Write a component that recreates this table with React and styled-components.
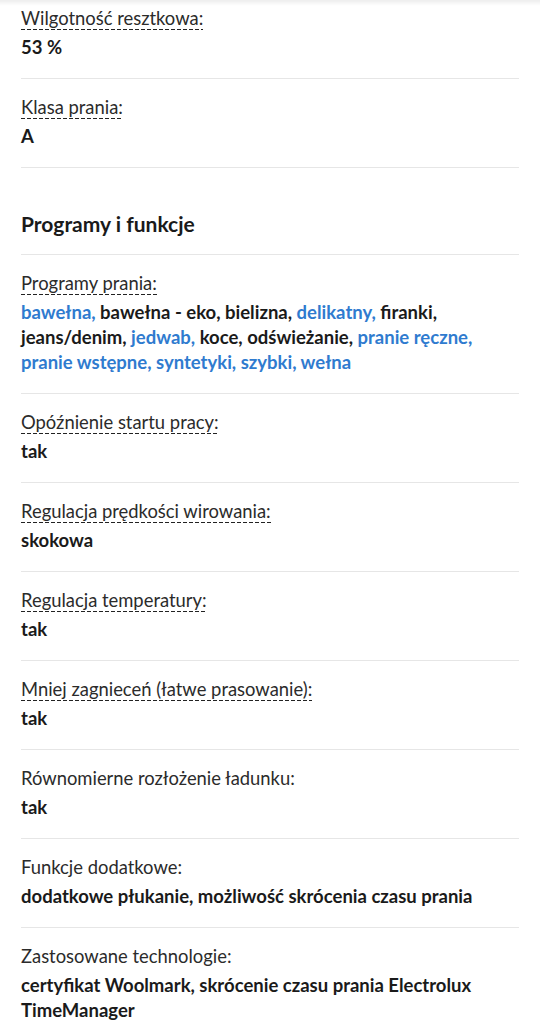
import React from 'react';
import styled, { createGlobalStyle } from 'styled-components';

const GlobalStyle = createGlobalStyle`
	html, body {
		margin: 0;
		padding: 0;
		background: #fff;
	}

	body {
		font-family: Lato, 'Open Sans', sans-serif;
		color: #222;
		-webkit-font-smoothing: antialiased;
	}
`;

const TopShade = styled.div`
	position: fixed;
	top: 0;
	left: 0;
	right: 0;
	height: 6px;
	background: linear-gradient(to bottom, rgba(0, 0, 0, 0.07), rgba(0, 0, 0, 0));
	pointer-events: none;
`;

const Specs = styled.div`
	margin-top: -10px;
	padding: 0 21px;
`;

const SectionTitle = styled.h2`
	margin: 0;
	padding: 41px 0 15px;
	font-size: 21px;
	line-height: 30px;
	font-weight: 700;
	color: #1a1a1a;
	border-bottom: 1px solid #e6e6e6;
`;

const Row = styled.div`
	padding: 15px 0 18px;
	border-bottom: 1px solid #e6e6e6;
`;

const Label = styled.div`
	font-size: 18.4px;
	line-height: 26px;
	font-weight: 400;
	color: #2b2b2b;
`;

const Hint = styled.span`
	padding-bottom: 1px;
	background-image: linear-gradient(to right, #222 4px, transparent 4px);
	background-size: 6px 1px;
	background-repeat: repeat-x;
	background-position: left bottom;
`;

const Value = styled.div`
	margin-top: 4px;
	font-size: 18.5px;
	line-height: 25px;
	font-weight: 700;
	color: #1a1a1a;
`;

const Link = styled.span`
	color: #2f7bcf;
`;

const Spec = ({ label, hint = true, children }) => (
	<Row>
		<Label>{hint ? <Hint>{label}</Hint> : label}</Label>
		<Value>{children}</Value>
	</Row>
);

const App = () => (
	<>
		<GlobalStyle />
		<Specs>
			<Spec label="Wilgotność resztkowa:">53 %</Spec>
			<Spec label="Klasa prania:">A</Spec>

			<SectionTitle>Programy i funkcje</SectionTitle>

			<Spec label="Programy prania:">
				<Link>bawełna,</Link> bawełna - eko, bielizna, <Link>delikatny,</Link> firanki,
				jeans/denim, <Link>jedwab,</Link> koce, odświeżanie, <Link>pranie ręczne,</Link>{' '}
				<Link>pranie wstępne, syntetyki, szybki, wełna</Link>
			</Spec>
			<Spec label="Opóźnienie startu pracy:">tak</Spec>
			<Spec label="Regulacja prędkości wirowania:">skokowa</Spec>
			<Spec label="Regulacja temperatury:">tak</Spec>
			<Spec label="Mniej zagnieceń (łatwe prasowanie):">tak</Spec>
			<Spec label="Równomierne rozłożenie ładunku:" hint={false}>tak</Spec>
			<Spec label="Funkcje dodatkowe:" hint={false}>
				dodatkowe płukanie, możliwość skrócenia czasu prania
			</Spec>
			<Spec label="Zastosowane technologie:" hint={false}>
				certyfikat Woolmark, skrócenie czasu prania Electrolux TimeManager
			</Spec>
		</Specs>
		<TopShade />
	</>
);

export default App;
